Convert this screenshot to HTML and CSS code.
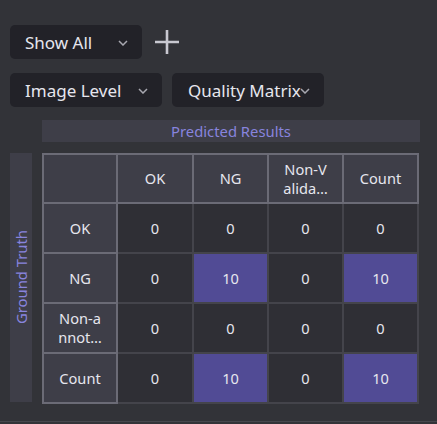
FILE: index.html
```html
<!DOCTYPE html>
<html>
<head>
<meta charset="utf-8">
<link rel="stylesheet" href="styles.css">
</head>
<body>
<div class="page">
  <div class="toolbar">
    <div class="row">
      <div class="select w-show"><span class="label">Show All</span><svg class="chev" width="10" height="6" viewBox="0 0 10 6"><polyline points="1,1 5,5 9,1" fill="none" stroke="#a8a8b0" stroke-width="1.5"/></svg></div>
      <svg class="plus" width="26" height="26" viewBox="0 0 26 26"><path d="M13 1V25M1 13H25" stroke="#c8c8d0" stroke-width="2.6"/></svg>
    </div>
    <div class="row row2">
      <div class="select w-image"><span class="label">Image Level</span><svg class="chev" width="10" height="6" viewBox="0 0 10 6"><polyline points="1,1 5,5 9,1" fill="none" stroke="#a8a8b0" stroke-width="1.5"/></svg></div>
      <div class="select w-quality"><span class="label">Quality Matrix</span><svg class="chev" width="10" height="6" viewBox="0 0 10 6"><polyline points="1,1 5,5 9,1" fill="none" stroke="#a8a8b0" stroke-width="1.5"/></svg></div>
    </div>
  </div>
  <div class="matrix">
    <div class="pred">Predicted Results</div>
    <div class="gt"><span>Ground Truth</span></div>
    <table class="grid">
      <colgroup><col class="c0"><col class="c1"><col class="c2"><col class="c3"><col class="c4"></colgroup>
      <tr class="first">
        <th></th><th>OK</th><th>NG</th><th>Non-V<br>alida…</th><th>Count</th>
      </tr>
      <tr>
        <th>OK</th><td>0</td><td>0</td><td>0</td><td>0</td>
      </tr>
      <tr>
        <th>NG</th><td>0</td><td class="hi">10</td><td>0</td><td class="hi">10</td>
      </tr>
      <tr>
        <th>Non-a<br>nnot…</th><td>0</td><td>0</td><td>0</td><td>0</td>
      </tr>
      <tr>
        <th>Count</th><td>0</td><td class="hi">10</td><td>0</td><td class="hi">10</td>
      </tr>
    </table>
  </div>
</div>
</body>
</html>
```

FILE: styles.css
```css
html, body {
  margin: 0;
  padding: 0;
  background: #323338;
}
body {
  font-family: "Noto Sans", "Open Sans", sans-serif;
  color: #e6e6ee;
  width: 437px;
  height: 424px;
  overflow: hidden;
}
.page {
  height: 422px;
  border-bottom: 1px solid #46474d;
  box-sizing: border-box;
  padding: 25px 0 0 10px;
}
.row {
  display: flex;
  align-items: center;
  height: 34px;
}
.row2 {
  margin-top: 14px;
  gap: 10px;
}
.select {
  position: relative;
  height: 34px;
  box-sizing: border-box;
  background: #222228;
  border-radius: 5px;
  padding: 0 15px;
  display: flex;
  align-items: center;
  font-size: 17px;
  overflow: hidden;
  white-space: nowrap;
}
.w-show { width: 132px; }
.w-image { width: 152px; }
.w-quality { width: 152px; padding-left: 16px; }
.chev {
  position: absolute;
  right: 14px;
  top: 15px;
}
.plus {
  margin-left: 12px;
}
.matrix {
  margin-top: 13px;
  display: grid;
  grid-template-columns: 22px 378px;
  grid-template-rows: 22px auto;
  column-gap: 10px;
  row-gap: 11px;
}
.pred {
  grid-column: 2;
  grid-row: 1;
  background: #3e3e48;
  color: #8884de;
  font-size: 14.8px;
  line-height: 22px;
  text-align: center;
}
.gt {
  grid-column: 1;
  grid-row: 2;
  background: #3e3e48;
  color: #8884de;
  font-size: 14.8px;
  display: flex;
  align-items: center;
  justify-content: center;
  height: 249px;
}
.gt span {
  writing-mode: vertical-rl;
  transform: rotate(180deg);
}
.grid {
  grid-column: 2;
  grid-row: 2;
  border-collapse: collapse;
  table-layout: fixed;
  width: 377px;
  font-size: 14.6px;
  line-height: 19px;
}
.c0 { width: 74px; }
.c1 { width: 76px; }
.c2, .c3, .c4 { width: 75px; }
.grid tr { height: 50px; }
.grid tr.first { height: 49px; }
.grid th {
  font-weight: normal;
  background: #3e3e48;
  border: 2px solid #6b6b76;
  text-align: center;
  padding: 0;
}
.grid td {
  background: #2f2f35;
  border: 2px solid #44444b;
  text-align: center;
  padding: 0;
}
.grid td.hi {
  background: #514b95;
}
```
